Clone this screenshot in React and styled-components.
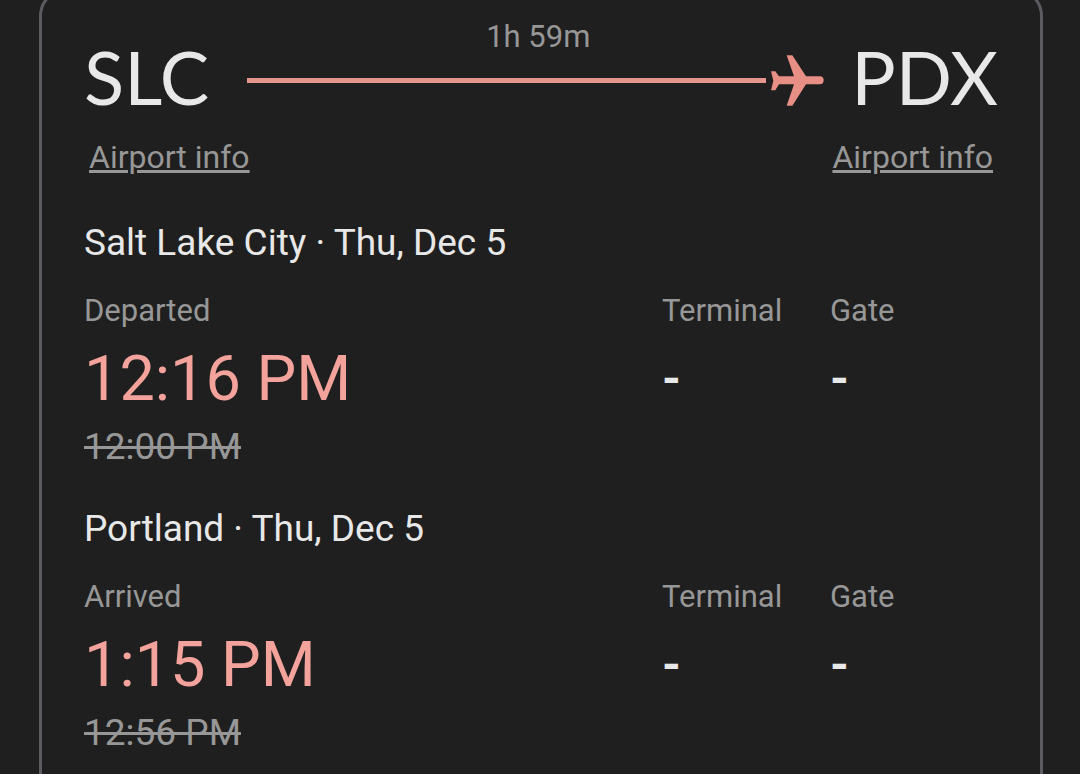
import React from 'react';
import styled, { createGlobalStyle } from 'styled-components';

const GlobalStyle = createGlobalStyle`
  * {
    box-sizing: border-box;
  }

  body {
    background-color: #1f1f1f;
    color: #e8e8e8;
    font-family: Roboto, 'Liberation Sans', sans-serif;
    margin: 0;
    overflow: hidden;
  }
`;

const Page = styled.main`
  height: 100vh;
  overflow: hidden;
  padding: 0 37px 0 39px;
`;

const Card = styled.article`
  border: 3px solid #5b5c61;
  border-radius: 28px;
  margin-top: -12px;
  padding: 28px 42px 60px;
`;

const Route = styled.header`
  display: flex;
  justify-content: space-between;
`;

const AirportCode = styled.h1`
  font-family: Lato, 'Open Sans', sans-serif;
  font-size: 74px;
  font-weight: 400;
  line-height: 80px;
  margin: 18px 0 0;
`;

const Links = styled.nav`
  display: flex;
  justify-content: space-between;
  margin-top: 22px;
  padding: 0 5px;
`;

const AirportLink = styled.a`
  color: #979797;
  font-size: 32px;
  line-height: 36px;
  text-decoration: underline;
  text-decoration-thickness: 3px;
  text-underline-offset: 2px;
`;

const Path = styled.div`
  display: flex;
  flex: 1;
  flex-direction: column;
  margin: 0 22px 0 38px;
`;

const Duration = styled.span`
  color: #979797;
  font-size: 31px;
  line-height: 36px;
  text-align: center;
`;

const Track = styled.div`
  align-items: center;
  display: flex;
  gap: 5px;
`;

const Line = styled.div`
  background-color: #e5958b;
  flex: 1;
  height: 5px;
`;

const Stop = styled.section`
  margin-top: ${({ $first }) => ($first ? '46px' : '38px')};
`;

const StopTitle = styled.h2`
  font-size: 37px;
  font-weight: 400;
  line-height: 44px;
  margin: 0 0 28px;
`;

const Details = styled.dl`
  display: grid;
  grid-template-columns: 1fr 168px 168px;
  margin: 0;
`;

const Label = styled.dt`
  color: #979797;
  font-size: 31px;
  line-height: 36px;
`;

const Value = styled.dd`
  font-size: 48px;
  font-weight: 700;
  line-height: 72px;
  margin: 14px 0 0;
`;

const Times = styled.dd`
  display: flex;
  flex-direction: column;
  margin: 14px 0 0;
`;

const ActualTime = styled.time`
  color: #f3a39b;
  font-size: 63px;
  line-height: 72px;
`;

const ScheduledTime = styled.s`
  align-self: flex-start;
  color: #979797;
  font-size: 37px;
  line-height: 44px;
  margin-top: 10px;
  text-decoration-thickness: 3px;
`;

const stops = [
  {
    city: 'Salt Lake City',
    date: 'Thu, Dec 5',
    status: 'Departed',
    actual: '12:16 PM',
    scheduled: '12:00 PM',
    terminal: '-',
    gate: '-',
  },
  {
    city: 'Portland',
    date: 'Thu, Dec 5',
    status: 'Arrived',
    actual: '1:15 PM',
    scheduled: '12:56 PM',
    terminal: '-',
    gate: '-',
  },
];

const Plane = () => (
  <svg width="58" height="51" viewBox="0 0 174 153" fill="#e88f85" aria-hidden="true">
    <path d="M0 49H13L24 64H69L47 1H64L105 64H146A12 12 0 0 1 146 88H105L64 152H47L69 88H24L13 106H0L7 77Z" />
  </svg>
);

const App = () => (
  <Page>
    <GlobalStyle />
    <Card>
      <Route>
        <AirportCode>SLC</AirportCode>
        <Path>
          <Duration>1h 59m</Duration>
          <Track>
            <Line />
            <Plane />
          </Track>
        </Path>
        <AirportCode>PDX</AirportCode>
      </Route>
      <Links>
        <AirportLink href="#slc">Airport info</AirportLink>
        <AirportLink href="#pdx">Airport info</AirportLink>
      </Links>
      {stops.map((stop, index) => (
        <Stop key={stop.city} $first={index === 0}>
          <StopTitle>{stop.city} · {stop.date}</StopTitle>
          <Details>
            <div>
              <Label>{stop.status}</Label>
              <Times>
                <ActualTime>{stop.actual}</ActualTime>
                <ScheduledTime>{stop.scheduled}</ScheduledTime>
              </Times>
            </div>
            <div>
              <Label>Terminal</Label>
              <Value>{stop.terminal}</Value>
            </div>
            <div>
              <Label>Gate</Label>
              <Value>{stop.gate}</Value>
            </div>
          </Details>
        </Stop>
      ))}
    </Card>
  </Page>
);

export default App;
